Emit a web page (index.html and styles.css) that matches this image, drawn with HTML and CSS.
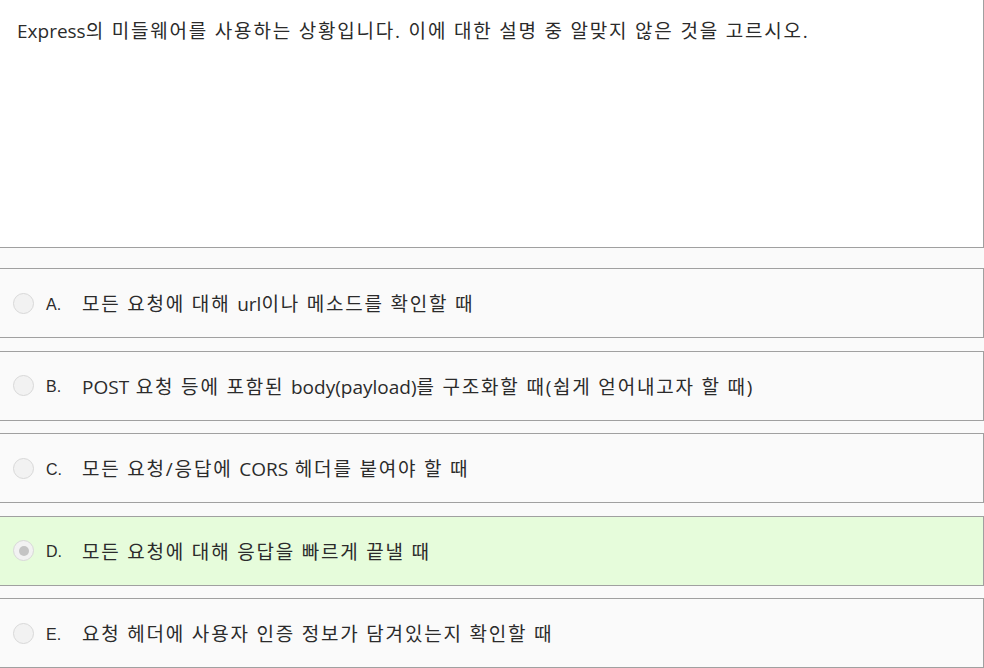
FILE: index.html
```html
<!DOCTYPE html>
<html lang="ko">
<head>
    <meta charset="UTF-8">
    <title>문제</title>
    <link rel="stylesheet" href="styles.css">
</head>
<body>
    <div class="question">
        <p><span class="en">Express</span>의 미들웨어를 사용하는 상황입니다. 이에 대한 설명 중 알맞지 않은 것을 고르시오.</p>
    </div>

    <!-- 보기 목록 -->
    <div class="options">
        <label class="option">
            <span class="radio"></span>
            <span class="letter">A.</span>
            <span class="text">모든 요청에 대해 <span class="en">url</span>이나 메소드를 확인할 때</span>
        </label>
        <label class="option">
            <span class="radio"></span>
            <span class="letter">B.</span>
            <span class="text"><span class="en">POST</span> 요청 등에 포함된 <span class="en">body(payload)</span>를 구조화할 때(쉽게 얻어내고자 할 때)</span>
        </label>
        <label class="option">
            <span class="radio"></span>
            <span class="letter">C.</span>
            <span class="text">모든 요청/응답에 <span class="en">CORS</span> 헤더를 붙여야 할 때</span>
        </label>
        <label class="option selected">
            <span class="radio checked"></span>
            <span class="letter">D.</span>
            <span class="text">모든 요청에 대해 응답을 빠르게 끝낼 때</span>
        </label>
        <label class="option">
            <span class="radio"></span>
            <span class="letter">E.</span>
            <span class="text">요청 헤더에 사용자 인증 정보가 담겨있는지 확인할 때</span>
        </label>
    </div>
</body>
</html>
```

FILE: styles.css
```css
body {
    margin: 0;
    background: #fafafa;
    font-family: "Open Sans", "Noto Sans CJK KR", sans-serif;
    color: #2b2b2b;
    overflow: hidden;
}
.question {
    margin: -1px 0 20px -1px;
    height: 247px;
    background: #fff;
    border: 1px solid #a0a0a0;
    padding: 0 17px;
}
.question p {
    margin: 17px 0 0 0;
    font-size: 19px;
    letter-spacing: 1.8px;
    line-height: 28px;
}
.en {
    letter-spacing: 0;
}
.options {
    margin-left: -1px;
}
.option {
    display: flex;
    align-items: center;
    height: 68px;
    margin-bottom: 12.5px;
    padding-left: 13px;
    background: #fafafa;
    border: 1px solid #a0a0a0;
}
.option.selected {
    background: #e6fcdb;
}
.radio {
    width: 19px;
    height: 19px;
    border: 1px solid #d8d8d8;
    border-radius: 50%;
    background: #f2f2f2;
    display: flex;
    align-items: center;
    justify-content: center;
    margin-right: 12px;
}
.radio.checked::after {
    content: "";
    width: 10px;
    height: 10px;
    border-radius: 50%;
    background: #c4c4c4;
}
.letter {
    font-family: "Liberation Sans", Arial, sans-serif;
    font-size: 16px;
    width: 36px;
    padding-top: 3px;
}
.text {
    font-size: 19px;
    letter-spacing: 1.8px;
}
```
